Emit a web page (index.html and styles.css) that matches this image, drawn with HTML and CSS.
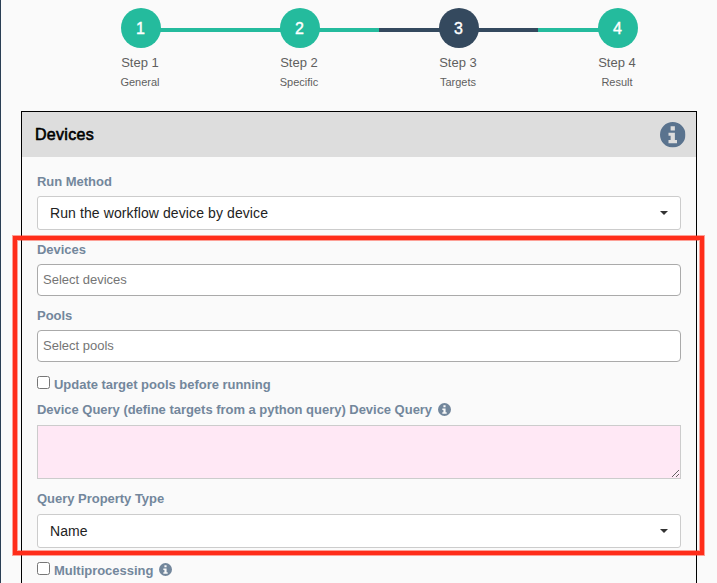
FILE: index.html
```html
<!DOCTYPE html>
<html lang="en">
<head>
<meta charset="utf-8">
<title>Workflow targets</title>
<link rel="stylesheet" href="styles.css">
</head>
<body>
<svg class="defs" aria-hidden="true">
  <symbol id="info" viewBox="0 0 24 24">
    <path fill="currentColor" fill-rule="evenodd" d="M12 0a12 12 0 1 0 0 24a12 12 0 1 0 0-24zM10 4h4v4h-4zM8 10h6v7h2v3H8v-3h2v-4H8z"/>
  </symbol>
</svg>
<main class="page">
  <ol class="steps">
    <li class="step first"><span class="num">1</span><span class="name">Step 1</span><span class="desc">General</span></li>
    <li class="step"><span class="num">2</span><span class="name">Step 2</span><span class="desc">Specific</span></li>
    <li class="step current"><span class="num">3</span><span class="name">Step 3</span><span class="desc">Targets</span></li>
    <li class="step last"><span class="num">4</span><span class="name">Step 4</span><span class="desc">Result</span></li>
  </ol>
  <section class="panel">
    <header class="panel-head"><h1>Devices</h1><svg class="info-lg"><use href="#info"/></svg></header>
    <div class="form">
      <div class="field">
        <span class="label">Run Method</span>
        <div class="select"><span>Run the workflow device by device</span><i class="caret"></i></div>
      </div>
      <div class="field">
        <label class="label" for="devices">Devices</label>
        <input class="input" id="devices" placeholder="Select devices">
      </div>
      <div class="field">
        <label class="label" for="pools">Pools</label>
        <input class="input" id="pools" placeholder="Select pools">
      </div>
      <label class="check"><input type="checkbox"><span>Update target pools before running</span></label>
      <div class="field query">
        <label class="label" for="query">Device Query (define targets from a python query) Device Query <svg class="info-sm"><use href="#info"/></svg></label>
        <textarea class="area" id="query"></textarea>
      </div>
      <div class="field type">
        <span class="label">Query Property Type</span>
        <div class="select"><span>Name</span><i class="caret"></i></div>
      </div>
      <label class="check"><input type="checkbox"><span>Multiprocessing</span><svg class="info-sm"><use href="#info"/></svg></label>
    </div>
  </section>
  <div class="highlight"></div>
</main>
</body>
</html>
```
FILE: styles.css
```css
* { box-sizing: border-box; }
body {
  margin: 0;
  background: #fafafa;
  font-family: "Liberation Sans", Arial, sans-serif;
  font-size: 13px;
  line-height: 20px;
  overflow: hidden;
}
.defs { display: none; }
.page {
  position: relative;
  height: 583px;
  overflow: hidden;
  padding: 8px 20px 0;
  border-left: 1px solid #2a3f54;
}
.steps {
  display: flex;
  width: 636px;
  height: 103px;
  margin: 0 0 0 40px;
  padding: 0;
  list-style: none;
}
.step {
  --tone: #24bb9d;
  flex: 1;
  display: flex;
  flex-direction: column;
  align-items: center;
  color: #5f5f5f;
  background: linear-gradient(var(--tone), var(--tone)) 0 20px / 100% 4px no-repeat;
}
.step.current { --tone: #34495e; }
.step.first { background-position: 100% 20px; background-size: 50% 4px; }
.step.last { background-size: 50% 4px; }
.num {
  width: 40px;
  height: 40px;
  border-radius: 50%;
  background: var(--tone);
  color: #fff;
  font-size: 16px;
  line-height: 41px;
  text-align: center;
  -webkit-text-stroke: 0.4px #fff;
}
.name { margin: 5px 1px 0 0; }
.desc { margin: -1px 1px 0 0; font-size: 11px; }
.panel {
  width: 676px;
  height: 500px;
  border: 1px solid #000;
}
.panel-head {
  display: flex;
  align-items: center;
  justify-content: space-between;
  height: 45px;
  padding: 0 10.5px 0 13px;
  background: #ddd;
}
.panel-head h1 {
  margin: 0;
  font-size: 16px;
  font-weight: 400;
  letter-spacing: 0.3px;
  color: #000;
  -webkit-text-stroke: 0.6px #000;
}
.info-lg { width: 25.5px; height: 25.5px; margin-top: 1px; color: #5a738e; }
.info-lg, .info-sm { display: block; }
.form { padding: 15px 15px 0; color: #73879c; }
.field { display: flex; flex-direction: column; gap: 4px; margin-bottom: 10px; }
.label { display: flex; align-items: center; height: 20px; font-weight: 700; letter-spacing: -0.025px; }
.info-sm { width: 13px; height: 13px; margin: -2px 0 0 5.5px; }
.select {
  display: flex;
  align-items: center;
  justify-content: space-between;
  height: 34px;
  padding: 0 12px;
  border: 1px solid #ccc;
  border-radius: 3px;
  background: #fff;
  color: #222;
  font-size: 14px;
  letter-spacing: 0.1px;
}
.caret { border: 4px solid transparent; border-top-color: #333; border-bottom: 0; }
.input {
  height: 32px;
  padding: 0 5px 2px;
  border: 1px solid #aaa;
  border-radius: 4px;
  background: #fff;
  font: inherit;
}
.input::placeholder { color: #757575; }
.check { display: flex; height: 20px; margin-top: 13px; font-weight: 700; letter-spacing: -0.02px; }
.check input { width: 13px; height: 13px; margin: 1px 4px 0 0; }
.check .info-sm { margin-top: 2px; }
.query { gap: 5px; margin-top: 5px; }
.type { gap: 5px; }
.area {
  height: 54px;
  border: 1px solid #ccc;
  background: #ffe8f5;
  resize: vertical;
}
.highlight {
  position: absolute;
  left: 12px;
  top: 236px;
  width: 691px;
  height: 319px;
  border: 4px solid #ff2d1a;
  box-shadow: 0 0 0 1px #ff2d1a70, inset 0 0 0 1px #ff2d1a70;
  pointer-events: none;
}
```
